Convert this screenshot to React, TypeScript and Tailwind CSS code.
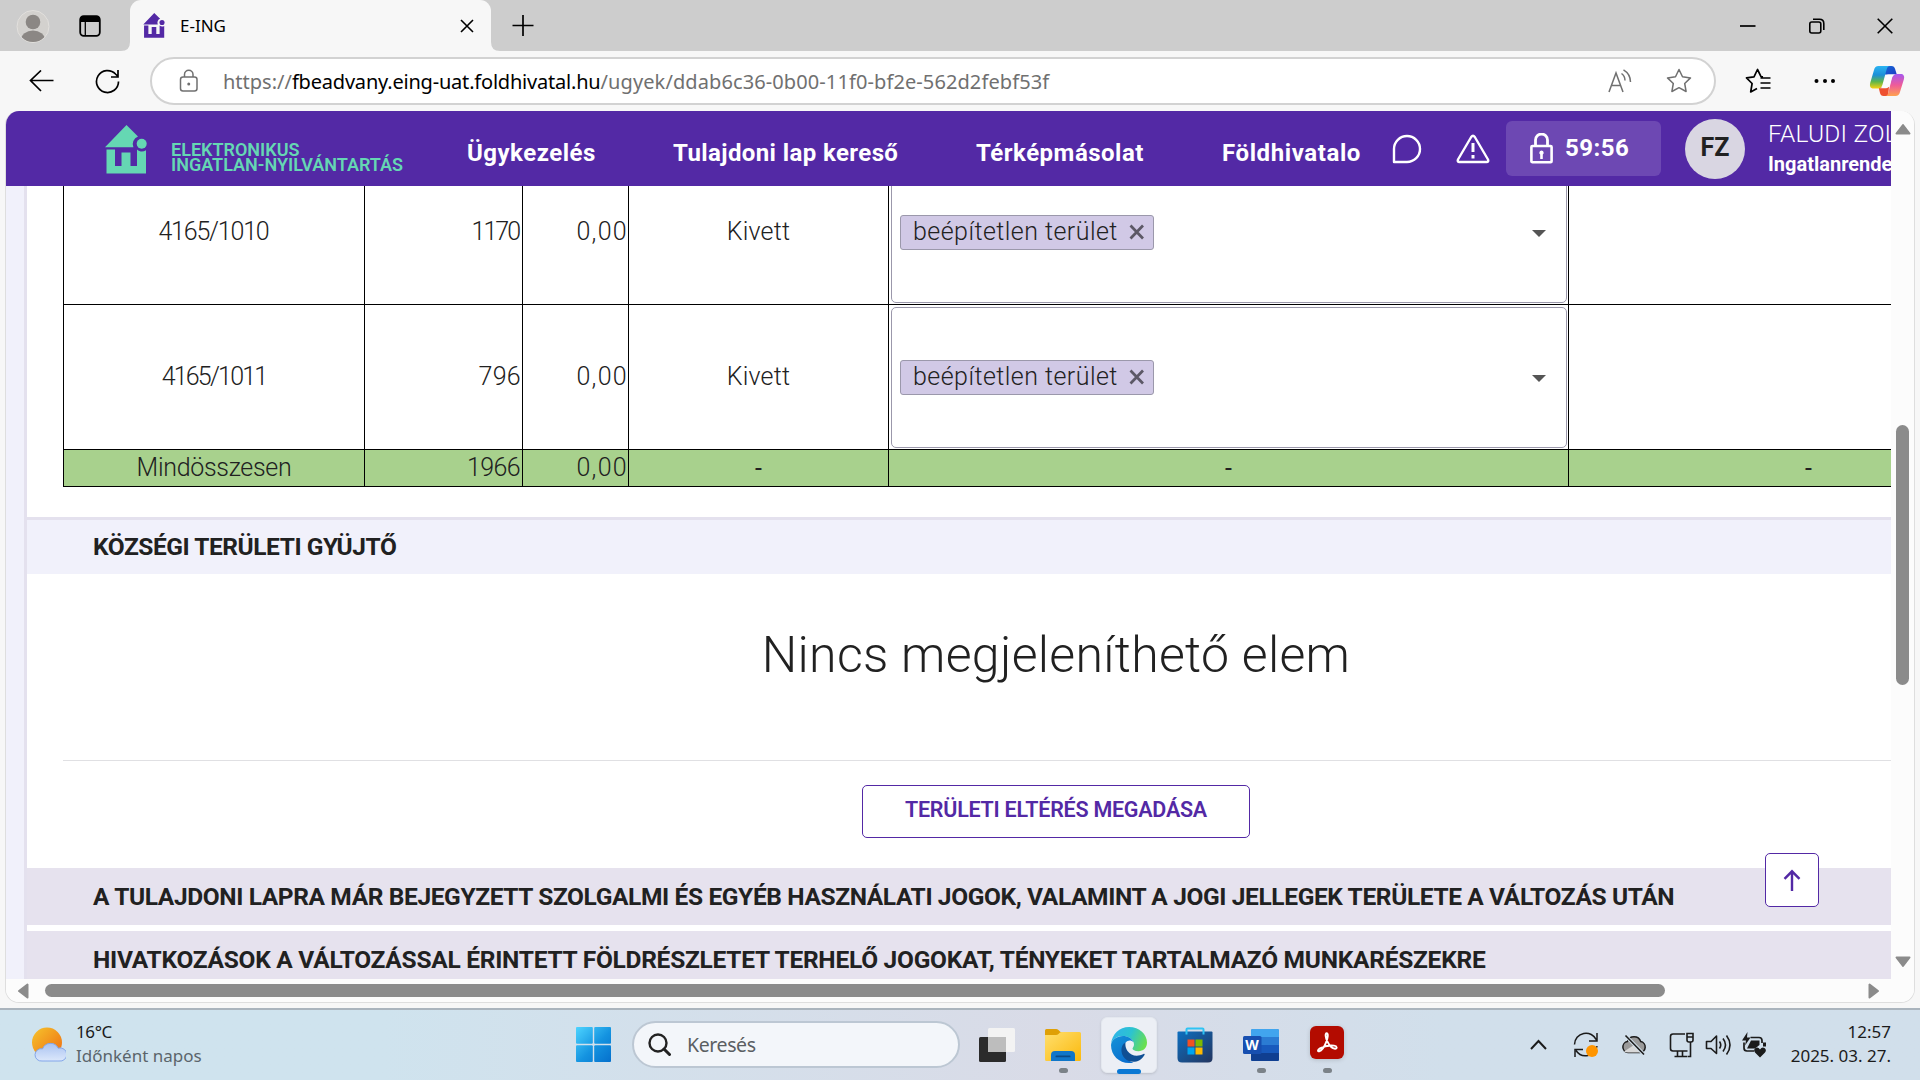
import React from "react";

/* ---------- Logos ---------- */

function HouseMark({ className }: { className: string }) {
  return (
    <svg className={className} viewBox="0 0 42 49" fill="currentColor">
      <path d="M21.500 0 33 11.500a8 8 0 0 0-4.600 10.800H0Z" />
      <circle cx="36.700" cy="18.700" r="5" />
      <path d="M1.500 24.500h8.500V41h6.500V27.500h9V41h6.500V24.500c3 2.600 6 2.600 9 .800V48.500H1.500Z" />
    </svg>
  );
}

function Copilot() {
  return (
    <svg className="h-8 w-9" viewBox="0 0 36 32">
      <defs>
        <linearGradient id="cpA" x1="0" y1="0" x2="0" y2="1">
          <stop offset="0" stopColor="#2bb4f2" />
          <stop offset=".4" stopColor="#1b8fd8" />
          <stop offset=".7" stopColor="#5fb64a" />
          <stop offset="1" stopColor="#f8d111" />
        </linearGradient>
        <linearGradient id="cpB" x1="0" y1="0" x2="0" y2="1">
          <stop offset="0" stopColor="#a657ee" />
          <stop offset=".5" stopColor="#ee5b9a" />
          <stop offset="1" stopColor="#ffa24f" />
        </linearGradient>
        <linearGradient id="cpC" x1="0" y1="0" x2="1" y2="1">
          <stop offset="0" stopColor="#1769d6" />
          <stop offset="1" stopColor="#1a3cc4" />
        </linearGradient>
      </defs>
      <path d="M16 1h6.500c2 0 3 1 3.600 3l1.700 5.500H16Z" fill="url(#cpC)" />
      <path d="M19 31h-4.500c-2 0-3-1.200-3.500-3L9.500 22H20Z" fill="#ee5030" />
      <path d="M9.500 1h11.500c-2 0-2.800 1.500-3.300 3.200L13.500 19.500c-.7 2.500-2 4-4.500 4H4.500C1.500 23.500.4 21.300 1.200 18L5 5C5.700 2.500 7 1 9.500 1Z" fill="url(#cpA)" />
      <path d="M26.500 31H16.500c1.500 0 2.300-1.500 2.800-3.200L23 13c.7-2.500 2-4 4.500-4H31.500c3 0 4.300 2 3.400 5.300L31 27c-.7 2.500-2 4-4.500 4Z" fill="url(#cpB)" />
      <path d="M19.500 9.500H26q-2.500.5-3.300 3.500l-1.800 6.500q-1 3.800-4 3.800H11q2.200-.5 3-3.300l2-7q.8-3.500 3.500-3.500Z" fill="#fbfbfd" />
    </svg>
  );
}

function EdgeLogo() {
  return (
    <svg className="h-9 w-9" viewBox="0 0 36 36">
      <defs>
        <linearGradient id="edT" x1="0" y1=".3" x2="1" y2=".6">
          <stop offset="0" stopColor="#2fb4ea" />
          <stop offset=".5" stopColor="#2cc3d0" />
          <stop offset="1" stopColor="#6be04c" />
        </linearGradient>
        <linearGradient id="edL" x1="0" y1="0" x2=".6" y2="1">
          <stop offset="0" stopColor="#1493d8" />
          <stop offset="1" stopColor="#0b6fce" />
        </linearGradient>
      </defs>
      <path d="M0 17C1 7 8.500 0 18 0c10.500 0 18 7.500 18 15.500 0 5.500-4 8.700-8.500 8.700-4 0-6-1.300-6-2.600 0-1 1.500-1.600 1.500-4.100C23 13 18 9 12 9 6 9 1.500 12.500 0 17Z" fill="url(#edT)" />
      <path d="M0 18C.7 12.500 6 9 12 9c5 0 9 2.600 10.500 6-1.500-1.500-4-2-6-1-6 3-7 18 6 21.400-1.500.4-3 .6-4.500.6C8 36 0 28.500 0 18Z" fill="url(#edL)" />
      <path d="M14.500 15.500C9.500 18 9 26 13.500 31c5.500 6 15.500 5 20-3 .5-1-.2-1.500-1-1-6 3-12.500 2-16-3-2-3-2.300-6-2-8.500Z" fill="#0f4f94" />
    </svg>
  );
}

function WeatherIcon() {
  return (
    <svg className="h-9 w-[34px]" viewBox="0 0 34 36">
      <defs>
        <linearGradient id="sun" x1="0" y1="0" x2="1" y2="1">
          <stop offset="0" stopColor="#f6c52c" />
          <stop offset="1" stopColor="#ee6a12" />
        </linearGradient>
        <linearGradient id="cld" x1="0" y1="0" x2="0" y2="1">
          <stop offset="0" stopColor="#a9c2f1" />
          <stop offset="1" stopColor="#dce8fb" />
        </linearGradient>
      </defs>
      <circle cx="15" cy="15.500" r="15" fill="url(#sun)" />
      <path d="M10 34a6.200 6.200 0 1 1 .600-12.200 8.500 8.500 0 0 1 15.600-.600A6.600 6.600 0 1 1 27 34Z" fill="url(#cld)" stroke="#83a6ea" strokeWidth="1" />
    </svg>
  );
}

function StartLogo() {
  return (
    <svg className="mb-px h-[35px] w-[35px]" viewBox="0 0 35 35">
      <defs>
        <linearGradient id="win" gradientUnits="userSpaceOnUse" x1="0" y1="0" x2="35" y2="35">
          <stop offset="0" stopColor="#4dd4ff" />
          <stop offset=".55" stopColor="#1493e0" />
          <stop offset="1" stopColor="#0570cc" />
        </linearGradient>
      </defs>
      <g fill="url(#win)">
        <rect width="16.800" height="16.800" rx="1" />
        <rect x="18.200" width="16.800" height="16.800" rx="1" />
        <rect y="18.200" width="16.800" height="16.800" rx="1" />
        <rect x="18.200" y="18.200" width="16.800" height="16.800" rx="1" />
      </g>
    </svg>
  );
}

function TaskView() {
  return (
    <svg className="h-9 w-9" viewBox="0 0 36 36">
      <rect x="0" y="10" width="27" height="25" rx="1.500" fill="#2b2b2b" />
      <rect x="9" y="1" width="27" height="24" rx="1.500" fill="#f3f3f3" />
      <rect x="9" y="10" width="18" height="15" fill="#bdbdbd" />
    </svg>
  );
}

function ExplorerLogo() {
  return (
    <svg className="h-9 w-9" viewBox="0 0 36 36">
      <defs>
        <linearGradient id="fld" x1="0" y1="0" x2="1" y2="1">
          <stop offset="0" stopColor="#ffdf6e" />
          <stop offset="1" stopColor="#fbb90d" />
        </linearGradient>
      </defs>
      <path d="M0 3.500Q0 2 1.500 2h9.500q1.500 0 2.500 1l2 2H33v8H0Z" fill="#dfa006" />
      <path d="M0 8h11q1.500 0 2.500-1l1.200-1.200q.8-.8 2-.8H34.500q1.500 0 1.500 1.500v26q0 1.500-1.500 1.500H1.500Q0 34 0 32.500Z" fill="url(#fld)" />
      <path d="M6 34V28q0-4 4-4H26q4 0 4 4v6Z" fill="#0f76c9" />
      <rect x="10.500" y="28.500" width="15" height="1.800" rx=".9" fill="#0a4a86" />
    </svg>
  );
}

function StoreLogo() {
  return (
    <svg className="h-9 w-9" viewBox="0 0 36 36">
      <defs>
        <linearGradient id="sto" x1="0" y1="0" x2="1" y2="1">
          <stop offset="0" stopColor="#0d6fc0" />
          <stop offset="1" stopColor="#23355f" />
        </linearGradient>
      </defs>
      <path d="M.5 5.500Q.5 4.500 1.500 4.500H34.500q1 0 1 1V31q0 4.500-4.500 4.500H5Q.5 35.500.5 31Z" fill="url(#sto)" />
      <path d="M9.500 7.500V2.500Q9.500 1.500 10.500 1.500H25.500q1 0 1 1V7.500" fill="none" stroke="#2ec3f4" strokeWidth="2" />
      <rect x="10.500" y="12.500" width="7" height="7" fill="#f25022" />
      <rect x="18.500" y="12.500" width="7" height="7" fill="#7fba00" />
      <rect x="10.500" y="20.500" width="7" height="7" fill="#00a4ef" />
      <rect x="18.500" y="20.500" width="7" height="7" fill="#ffb900" />
    </svg>
  );
}

function WordLogo() {
  return (
    <div className="relative h-9 w-9">
      <svg className="h-9 w-9" viewBox="0 0 36 36">
        <rect x="8" y="2" width="28" height="32" rx="1.500" fill="#2b7cd3" />
        <path d="M8 10V3.500Q8 2 9.500 2h25Q36 2 36 3.500V10Z" fill="#41a5ee" />
        <path d="M8 18h28v8H8Z" fill="#185abd" />
        <path d="M8 26h28v6.500q0 1.500-1.500 1.500h-25Q8 34 8 32.500Z" fill="#103f91" />
        <rect x="0" y="9" width="18.500" height="18" rx="1.500" fill="#174fb0" />
      </svg>
      <span className="absolute top-[9px] left-0 w-[18px] text-center font-['Open_Sans',sans-serif] text-[14px] leading-[18px] font-bold text-white">W</span>
    </div>
  );
}

function AcrobatLogo() {
  return (
    <svg className="mb-[3px] h-[34px] w-[34px] drop-shadow-sm" viewBox="0 0 34 34">
      <rect x="0" y="0" width="34" height="33" rx="6" fill="#b30b00" />
      <path
        d="M16.800 7.300c-2 0-1.200 4.500.5 8 1.800 3.700 5 7.200 7.700 7.400 2.400.2 2.300-2.700-1-3.100-4.500-.5-10.500.8-14 2.800-2.800 1.600-2.300 3.300-.8 2.900 2.300-.700 5.300-5 6.900-9 1.600-4 2.500-9 .7-9Z"
        fill="none"
        stroke="#fff"
        strokeWidth="1.900"
      />
    </svg>
  );
}

/* ---------- Browser chrome ---------- */

const line = "fill-none stroke-current";

function TabStrip() {
  return (
    <div className="flex h-[51px] items-center bg-[#cdcdcd]">
      <svg className="ml-4 h-[34px] w-[34px]" viewBox="0 0 34 34">
        <defs>
          <clipPath id="av">
            <circle cx="17" cy="17.500" r="15.500" />
          </clipPath>
        </defs>
        <circle cx="17" cy="17.500" r="16" fill="#d3d1ce" stroke="#e2e0dd" />
        <g clipPath="url(#av)" fill="#8b8784">
          <circle cx="17" cy="13" r="7.300" />
          <ellipse cx="17" cy="31" rx="12" ry="9.500" />
        </g>
      </svg>
      <svg className="ml-[29px] h-[22px] w-[22px]" viewBox="0 0 22 22">
        <rect x="1.200" y="1.200" width="19.600" height="19.600" rx="3.500" className={line} strokeWidth="1.800" />
        <path d="M1 7V4.500Q1 1 4.500 1h13Q21 1 21 4.500V7Z" />
        <path d="M6.300 6v15" className={line} strokeWidth="1.300" />
      </svg>
      <svg className="ml-[20px] h-[9px] w-[9px] self-end" viewBox="0 0 9 9">
        <path d="M9 0v9H0Q9 9 9 0Z" fill="#f7f7f7" />
      </svg>
      <div className="flex h-full w-[361px] items-center rounded-t-[11px] bg-[#f7f7f7]">
        <HouseMark className="ml-[13px] h-[25px] w-[22px] text-[#5329a5]" />
        <span className="ml-[15px] font-['Noto_Sans',sans-serif] text-[17px]">E-ING</span>
        <svg className="mr-[17px] ml-auto h-[14px] w-[14px]" viewBox="0 0 14 14">
          <path d="m1 1 12 12M13 1 1 13" className={line} strokeWidth="1.600" />
        </svg>
      </div>
      <svg className="h-[9px] w-[9px] self-end" viewBox="0 0 9 9">
        <path d="M0 0v9h9Q0 9 0 0Z" fill="#f7f7f7" />
      </svg>
      <svg className="mb-px ml-[12px] h-[21px] w-[22px]" viewBox="0 0 22 21">
        <path d="M11 0v21M.5 10.500h21" className={line} strokeWidth="1.700" />
      </svg>
      <svg className="ml-auto h-4 w-4" viewBox="0 0 16 16">
        <path d="M0 8h15.500" className={line} strokeWidth="1.700" />
      </svg>
      <svg className="ml-[53px] h-4 w-4" viewBox="0 0 16 16">
        <rect x=".8" y="4" width="11" height="11" rx="2" className={line} strokeWidth="1.600" />
        <path d="M4 1.200h6.500q4.300 0 4.300 4.300V12" className={line} strokeWidth="1.600" />
      </svg>
      <svg className="mr-[27px] ml-[52px] h-4 w-4" viewBox="0 0 16 16">
        <path d="m.7.700 14.600 14.600M15.300.700.700 15.300" className={line} strokeWidth="1.600" />
      </svg>
    </div>
  );
}

const STAR = "M13 1.500l3.500 7.300 8 1.100-5.800 5.600 1.400 8L13 19.700l-7.100 3.800 1.400-8L1.500 9.900l8-1.100Z";

function Toolbar() {
  return (
    <div className="flex h-[60px] items-center bg-[#f7f7f7]">
      <svg className="ml-[29px] h-[22px] w-[25px]" viewBox="0 0 25 22">
        <path d="M24.500 10.500H1.500M12 .500 1.500 10.500 12 21" className={line} strokeWidth="1.700" />
      </svg>
      <svg className="ml-[41px] h-[25px] w-[25px]" viewBox="0 0 25 25">
        <path d="M23.500 12.500A11 11 0 1 1 20.500 5l2.500 2.500M23 1v7h-7" className={line} strokeWidth="1.700" />
      </svg>
      <div className="ml-[30px] flex h-12 w-[1566px] items-center rounded-full border-2 border-[#d2d2d2] bg-white text-[#707070]">
        <svg className="ml-[27px] h-6 w-5" viewBox="0 0 20 24">
          <rect x="1.500" y="8" width="16.500" height="14" rx="2.500" className={line} strokeWidth="1.500" />
          <path d="M5.500 8V5.500a4.200 4.200 0 0 1 8.500 0V8" className={line} strokeWidth="1.500" />
          <circle cx="9.750" cy="15" r="1.500" fill="currentColor" />
        </svg>
        <div className="ml-[24px] flex pt-px font-['Noto_Sans',sans-serif] text-[20px] leading-7 whitespace-nowrap">
          <span>https://</span>
          <span className="tracking-[-0.2px] text-black">fbeadvany.eing-uat.foldhivatal.hu</span>
          <span className="tracking-[0.1px]">/ugyek/ddab6c36-0b00-11f0-bf2e-562d2febf53f</span>
        </div>
        <svg className="ml-auto h-6 w-6" viewBox="0 0 24 24">
          <path d="m1 23 7-19 7 19M3.500 16.500h9M13.500 4.500Q17 7 17 11.500M15.500.800Q22.500 5 22.500 13" className={line} strokeWidth="1.500" />
        </svg>
        <svg className="mr-[22px] ml-[34px] h-[26px] w-[26px]" viewBox="0 0 26 26">
          <path d={STAR} className={line} strokeWidth="1.500" strokeLinejoin="round" />
        </svg>
      </div>
      <svg className="ml-[29px] h-[26px] w-[27px]" viewBox="0 0 27 26">
        <path d="M18 8.900 16 8.600 12.500 1.500 9 8.800l-7.500 1.100 5.600 5.600-1.400 8.500L12 20.500M15.500 10h10M15.500 15h10M15.500 20h10" className={line} strokeWidth="1.700" strokeLinejoin="round" />
      </svg>
      <svg className="ml-[42px] h-1.5 w-[22px]" viewBox="0 0 22 6">
        <circle cx="2.500" cy="3" r="2" />
        <circle cx="11" cy="3" r="2" />
        <circle cx="19" cy="3" r="2" />
      </svg>
      <div className="ml-[33px]">
        <Copilot />
      </div>
    </div>
  );
}

/* ---------- Site header ---------- */

function SiteHeader() {
  return (
    <header className="flex h-[75px] shrink-0 items-center overflow-hidden bg-[#5329a5] whitespace-nowrap text-white">
      <HouseMark className="mt-px ml-[99px] h-[49px] w-[42px] shrink-0 text-[#65d7b3]" />
      <div className="mt-[17px] ml-6 w-[238px] shrink-0 text-[18px] leading-[15px] font-semibold text-[#65d7b3]">
        <p>ELEKTRONIKUS</p>
        <p>INGATLAN-NYILVÁNTARTÁS</p>
      </div>
      <nav className="mt-2 ml-[58px] flex w-[926px] shrink-0 text-[24px] leading-8 font-bold tracking-[0.5px]">
        <a className="w-[206px]">Ügykezelés</a>
        <a className="w-[303px] tracking-[0.4px]">Tulajdoni lap kereső</a>
        <a className="w-[246px]">Térképmásolat</a>
        <a className="w-[171px] tracking-[0.6px]">Földhivatalo</a>
      </nav>
      <svg className="-ml-px h-[30px] w-[30px] shrink-0" viewBox="0 0 30 30">
        <path d="M2 28V15A13 13 0 1 1 15 28Z" className={line} strokeWidth="2.400" strokeLinejoin="round" />
      </svg>
      <svg className="ml-[34px] h-[30px] w-[34px] shrink-0" viewBox="0 0 34 30">
        <path d="M15.200 3 2 25.500Q1 28 3.500 28h27Q33 28 32 25.500L18.800 3Q17 .500 15.200 3Z" className={line} strokeWidth="2.400" strokeLinejoin="round" />
        <path d="M17 9v9M17 21v3.500" className={line} strokeWidth="3" />
      </svg>
      <div className="ml-4 flex h-[55px] w-[155px] shrink-0 items-center rounded-md bg-[#6d48b3]">
        <svg className="ml-6 h-[31px] w-[23px]" viewBox="0 0 23 31">
          <path d="M5.500 13V7a6 6 0 0 1 12 0v6" className={line} strokeWidth="2.800" />
          <rect x="1.400" y="13" width="20.200" height="16.200" rx="1" className={line} strokeWidth="2.600" />
          <path d="M11.500 17.500a2.300 2.300 0 0 1 1.300 4.100V26h-2.600V21.600a2.300 2.300 0 0 1 1.300-4.100Z" fill="currentColor" />
        </svg>
        <span className="mb-px ml-[12px] text-[24px] font-bold tracking-[0.5px]">59:56</span>
      </div>
      <div className="ml-6 flex h-[60px] w-[60px] shrink-0 items-center justify-center rounded-full bg-[#d9d6e2] pb-0.5 text-[25px] font-bold text-[#212121]">
        FZ
      </div>
      <div className="ml-[23px] shrink-0 leading-[30px]">
        <p className="text-[24.500px] font-light tracking-[0.2px]">FALUDI ZOLTÁN</p>
        <p className="text-[20px] font-bold">Ingatlanrendező</p>
      </div>
    </header>
  );
}

/* ---------- Land table ---------- */

const cell = "shrink-0 border-r border-b border-black flex items-center";

function LandUseSelect() {
  return (
    <div className="mt-[2px] mr-px mb-px ml-[2px] flex flex-1 items-center justify-between self-stretch rounded-[5px] border border-[#9b98ab]">
      <div className="ml-2 flex h-[35px] w-[254px] items-center rounded-[3px] border border-[#9b98ab] bg-[#d1c9e6] pl-3">
        <span className="w-[216px] pb-px tracking-[0.45px]">beépítetlen terület</span>
        <svg className="mb-0.5 h-4 w-4" viewBox="0 0 16 16">
          <path d="m1.500 1.500 12.500 13M14 1.500l-12.500 13" stroke="#5c5866" strokeWidth="2.700" />
        </svg>
      </div>
      <svg className="mt-0.5 mr-5 h-[7px] w-[14px]" viewBox="0 0 14 7">
        <path d="M0 0h14L7 7Z" fill="#555" />
      </svg>
    </div>
  );
}

function LandTable() {
  return (
    <div className="-mt-[26px] ml-9 w-[1986px] shrink-0 border-l border-black text-[25px] font-light">
      <div className="flex h-[145px]">
        <div className={`${cell} w-[301px] justify-center pr-px tracking-[-1.200px]`}>4165/1010</div>
        <div className={`${cell} w-[158px] justify-end pr-[3px] tracking-[-2px]`}>1170</div>
        <div className={`${cell} w-[106px] justify-end tracking-[1.3px]`}>0,00</div>
        <div className={`${cell} w-[260px] justify-center tracking-[0.2px]`}>Kivett</div>
        <div className={`${cell} w-[680px]`}>
          <LandUseSelect />
        </div>
        <div className={`${cell} w-[480px]`} />
      </div>
      <div className="flex h-[145px]">
        <div className={`${cell} w-[301px] justify-center tracking-[-1.800px]`}>4165/1011</div>
        <div className={`${cell} w-[158px] justify-end pr-px tracking-[0.3px]`}>796</div>
        <div className={`${cell} w-[106px] justify-end tracking-[1.3px]`}>0,00</div>
        <div className={`${cell} w-[260px] justify-center tracking-[0.2px]`}>Kivett</div>
        <div className={`${cell} w-[680px]`}>
          <LandUseSelect />
        </div>
        <div className={`${cell} w-[480px]`} />
      </div>
      <div className="flex h-[37px] bg-[#a8d18d]">
        <div className={`${cell} w-[301px] justify-center tracking-[-0.3px]`}>Mindösszesen</div>
        <div className={`${cell} w-[158px] justify-end pr-[2px] tracking-[-0.6px]`}>1966</div>
        <div className={`${cell} w-[106px] justify-end tracking-[1.3px]`}>0,00</div>
        <div className={`${cell} w-[260px] justify-center pt-0.5 font-normal`}>-</div>
        <div className={`${cell} w-[680px] justify-center pt-0.5 font-normal`}>-</div>
        <div className={`${cell} w-[480px] justify-center pt-0.5 font-normal`}>-</div>
      </div>
    </div>
  );
}

/* ---------- Page ---------- */

function PageBody() {
  return (
    <main className="flex min-h-0 flex-1 overflow-hidden bg-[#f1f1fb] pl-[18px]">
      <div className="relative flex flex-1 flex-col overflow-hidden border-l-[3px] border-[#e4e1ee] bg-white text-[#212121]">
        <LandTable />
        <h2 className="mt-[30px] flex h-[57px] shrink-0 items-center border-t-[3px] border-[#e4e1ee] bg-[#f1f1fb] pl-[66px] text-[24.500px] font-bold tracking-[-0.45px]">
          KÖZSÉGI TERÜLETI GYÜJTŐ
        </h2>
        <div className="ml-9 flex w-[1986px] shrink-0 flex-col items-center">
          <p className="flex h-[187px] w-full items-center justify-center border-b border-[#e0e0e3] pb-[24px] text-[50px] font-light tracking-[0.3px]">
            Nincs megjeleníthető elem
          </p>
          <button className="mt-6 flex h-[53px] w-[388px] items-center justify-center rounded-[5px] border border-[#5329a5] pb-[3px] text-[21.500px] font-semibold tracking-[-0.25px] text-[#5329a5]">
            TERÜLETI ELTÉRÉS MEGADÁSA
          </button>
        </div>
        <h2 className="mt-[30px] flex h-[57px] shrink-0 items-center bg-[#e6e2ee] pt-0.5 pl-[66px] text-[24.500px] font-bold tracking-[-0.38px] whitespace-nowrap">
          A TULAJDONI LAPRA MÁR BEJEGYZETT SZOLGALMI ÉS EGYÉB HASZNÁLATI JOGOK, VALAMINT A JOGI JELLEGEK TERÜLETE A VÁLTOZÁS UTÁN
        </h2>
        <h2 className="mt-1.5 flex h-[57px] shrink-0 items-center bg-[#e6e2ee] pt-0.5 pl-[66px] text-[24.500px] font-bold tracking-[-0.26px] whitespace-nowrap">
          HIVATKOZÁSOK A VÁLTOZÁSSAL ÉRINTETT FÖLDRÉSZLETET TERHELŐ JOGOKAT, TÉNYEKET TARTALMAZÓ MUNKARÉSZEKRE
        </h2>
        <button className="absolute right-[72px] bottom-[72px] flex h-[54px] w-[54px] items-center justify-center rounded-[5px] border border-[#5329a5] bg-white text-[#5329a5]">
          <svg className="h-[22px] w-[18px]" viewBox="0 0 18 22">
            <path d="M9 22V2M1.500 9.800 9 2.300l7.500 7.500" className={line} strokeWidth="2.400" />
          </svg>
        </button>
      </div>
    </main>
  );
}

function VerticalScroll() {
  return (
    <div className="flex w-[23px] flex-col items-center bg-[#fcfcfc] text-[#8b8b8b]">
      <svg className="mt-[12px] h-[12px] w-4" viewBox="0 0 16 12">
        <path d="M8 2 14.500 10.500h-13Z" fill="currentColor" stroke="currentColor" strokeWidth="2" strokeLinejoin="round" />
      </svg>
      <div className="mt-[290px] h-[260px] w-[13px] rounded-full bg-[#8b8b8b]" />
      <svg className="mt-[271px] h-[12px] w-4" viewBox="0 0 16 12">
        <path d="M8 10 1.500 1.500h13Z" fill="currentColor" stroke="currentColor" strokeWidth="2" strokeLinejoin="round" />
      </svg>
    </div>
  );
}

function HorizontalScroll() {
  return (
    <div className="flex h-[23px] items-center bg-[#fcfcfc] text-[#8b8b8b]">
      <svg className="ml-[11px] h-4 w-[12px]" viewBox="0 0 12 16">
        <path d="M2 8 10.500 1.500v13Z" fill="currentColor" stroke="currentColor" strokeWidth="2" strokeLinejoin="round" />
      </svg>
      <div className="ml-4 h-[13px] w-[1620px] rounded-full bg-[#8b8b8b]" />
      <svg className="ml-[203px] h-4 w-[12px]" viewBox="0 0 12 16">
        <path d="M10 8 1.500 1.500v13Z" fill="currentColor" stroke="currentColor" strokeWidth="2" strokeLinejoin="round" />
      </svg>
    </div>
  );
}

/* ---------- Taskbar ---------- */

function RunningDot() {
  return <span className="absolute -bottom-[10px] left-[14px] h-[5px] w-[9px] rounded-full bg-[#7b8288]" />;
}

function Tray() {
  return (
    <div className="ml-auto flex items-center text-[#1b1b1b]">
      <svg className="h-[11px] w-[17px]" viewBox="0 0 17 11">
        <path d="m1 10 7.500-8 7.500 8" className={line} strokeWidth="2" />
      </svg>
      <svg className="ml-[26px] h-[26px] w-[26px]" viewBox="0 0 26 26">
        <path d="M1.500 12.500A11.500 11.500 0 0 1 23.500 8M24 1v8h-8M24 14A11.500 11.500 0 0 1 3 18.500M2 25v-7.500h8" className={line} strokeWidth="1.500" />
        <circle cx="19" cy="19" r="6" fill="#ff9500" />
      </svg>
      <svg className="ml-[22px] h-[22px] w-[26px]" viewBox="0 0 26 22">
        <path d="M7 18.500a5.500 5.500 0 0 1-.600-10.900 7 7 0 0 1 13.300 0A5.500 5.500 0 0 1 19 18.500Z" fill="#9a9a9a" stroke="currentColor" strokeWidth="1.500" />
        <path d="M3 17.500 13 11l9 6.500q-1 1-3 1H7Q4.500 18.500 3 17.500Z" fill="#d8d8d8" />
        <path d="m4.500 1.500 18.500 19" stroke="#d2e0eb" strokeWidth="3.500" />
        <path d="m4.500 1.500 18.500 19" stroke="currentColor" strokeWidth="1.600" />
      </svg>
      <svg className="ml-[22px] h-[26px] w-[26px]" viewBox="0 0 26 26">
        <path d="M16 2H4Q1.500 2 1.500 4.500v12Q1.500 19 4 19H18.500M8.500 19v5M13.500 19v5M5.500 24.500h13M18 1.500h6V8q0 2-2 2h-2q-2 0-2-2ZM18 5h6M21.500 10v14.500H19" className={line} strokeWidth="1.600" />
      </svg>
      <svg className="ml-[10px] h-6 w-[26px]" viewBox="0 0 26 24">
        <path d="M1.500 8.500h4.500L11.500 3v17.500L6 15.500H1.500ZM14.500 8.500q2.500 3.500 0 7M18 5.500q5 6.500 0 13M21.500 2.500q7 9.500 0 19" className={line} strokeWidth="1.600" strokeLinejoin="round" />
      </svg>
      <svg className="ml-[10px] h-[26px] w-[26px]" viewBox="0 0 26 26">
        <path d="M9.500 5.500H18Q21 5.500 21 8.500V11M3 10.500V16q0 3 3 3h7" className={line} strokeWidth="1.700" />
        <path d="M10 8.500h8.500V13l-4.500 3.500H6Z" fill="currentColor" />
        <path d="M6.500 0 1 8.500h4L4 13.500 9.500 5.500H6ZM22 10.500h3v4h-3ZM19 17.500q2-3 4.500-1.500 2.500 2 .5 4.500L19 25.500l-5-5q-2-2.500.5-4.500 2.500-1.500 4.500 1.500Z" fill="currentColor" />
      </svg>
      <div className="mr-[29px] mb-0.5 ml-[24px] text-right font-['Noto_Sans',sans-serif] text-[17px] leading-6">
        <p>12:57</p>
        <p>2025. 03. 27.</p>
      </div>
    </div>
  );
}

function Taskbar() {
  return (
    <footer className="flex h-[72px] items-center border-t-2 border-[#aab4bd] bg-linear-to-r from-[#cfe3ee] from-20% via-[#d9dbe7] via-55% to-[#d1dfeb] to-75% pb-px">
      <div className="ml-8 flex w-[544px] items-center gap-[10px] font-['Noto_Sans',sans-serif] text-[17px] leading-6">
        <WeatherIcon />
        <div className="mb-0.5">
          <p className="tracking-[-0.4px] text-[#1b1b1b]">16°C</p>
          <p className="text-[#5b656b]">Időnként napos</p>
        </div>
      </div>
      <StartLogo />
      <div className="ml-[21px] flex h-[47px] w-[328px] items-center rounded-full border-2 border-[#bcc7d3] bg-[#f3f6fa]">
        <svg className="ml-[14px] h-[23px] w-[23px] text-[#222]" viewBox="0 0 23 23">
          <circle cx="10" cy="10" r="8.500" className={line} strokeWidth="2.400" />
          <path d="m16 16 5.500 5.500" className={line} strokeWidth="3" strokeLinecap="round" />
        </svg>
        <span className="ml-4 font-['Noto_Sans',sans-serif] text-[19.500px] tracking-[-0.4px] text-[#5a5e62]">Keresés</span>
      </div>
      <div className="ml-[19px]">
        <TaskView />
      </div>
      <div className="relative ml-[30px]">
        <ExplorerLogo />
        <RunningDot />
      </div>
      <div className="relative ml-5 flex h-14 w-14 items-center justify-center rounded-md border border-[#e4e8ef] bg-[#eceff5] shadow-sm">
        <EdgeLogo />
        <span className="absolute -bottom-[2px] left-[15px] h-[5px] w-6 rounded-full bg-[#0a78d4]" />
      </div>
      <div className="ml-5">
        <StoreLogo />
      </div>
      <div className="relative ml-[30px]">
        <WordLogo />
        <RunningDot />
      </div>
      <div className="relative ml-[31px] flex h-9 w-[34px] items-center">
        <AcrobatLogo />
        <span className="absolute -bottom-[10px] left-[13px] h-[5px] w-[9px] rounded-full bg-[#7b8288]" />
      </div>
      <Tray />
    </footer>
  );
}

export default function App() {
  return (
    <div className="flex h-[1080px] w-[1920px] flex-col overflow-hidden bg-[#f7f7f7] font-[Roboto,sans-serif] text-black">
      <TabStrip />
      <Toolbar />
      <div className="mr-[5px] mb-[5px] ml-[5px] flex min-h-0 flex-1 flex-col overflow-hidden rounded-[14px] border-x border-b border-[#dedede] bg-[#fcfcfc]">
        <div className="flex min-h-0 flex-1">
          <div className="flex w-[1885px] flex-col">
            <SiteHeader />
            <PageBody />
          </div>
          <VerticalScroll />
        </div>
        <HorizontalScroll />
      </div>
      <Taskbar />
    </div>
  );
}
